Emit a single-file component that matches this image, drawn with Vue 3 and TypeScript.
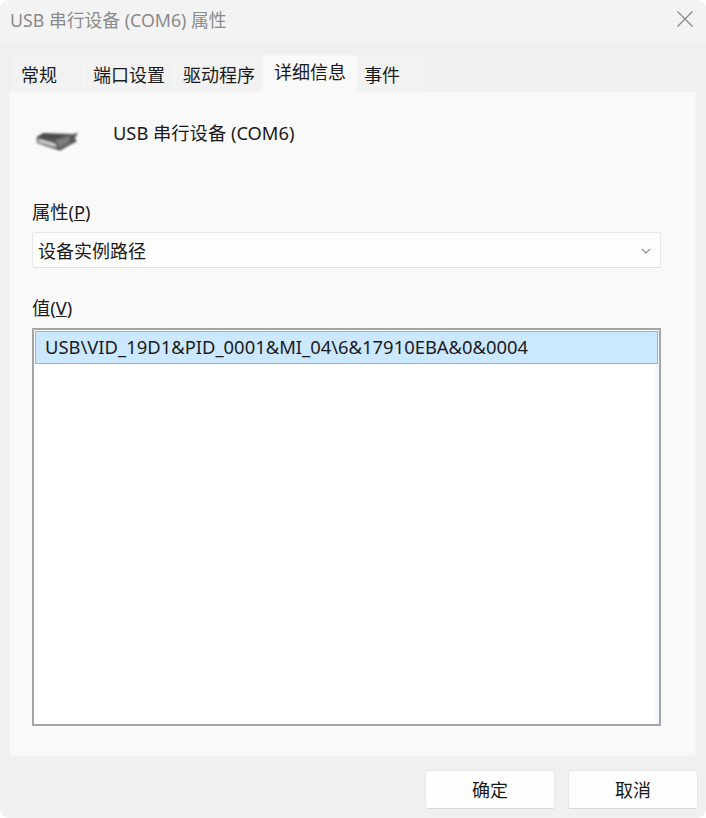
<script setup lang="ts">
const tabs = [
  { label: '常规', active: false, w: 72 },
  { label: '端口设置', active: false, w: 90 },
  { label: '驱动程序', active: false, w: 88 },
  { label: '详细信息', active: true, w: 95 },
  { label: '事件', active: false, w: 67 },
]
</script>

<template>
  <div class="window">
    <header class="titlebar">
      <span class="title">USB 串行设备 (COM6) 属性</span>
      <svg class="close" width="16" height="16" viewBox="0 0 16 16" aria-hidden="true">
        <path d="M0.5 0.5 L15.5 15.5 M15.5 0.5 L0.5 15.5" stroke="#8a8a8a" stroke-width="1.3" fill="none" />
      </svg>
    </header>

    <div class="content">
      <nav class="tabs">
        <div
          v-for="t in tabs"
          :key="t.label"
          class="tab"
          :class="{ active: t.active }"
          :style="{ width: t.w + 'px' }"
        >{{ t.label }}</div>
      </nav>

      <section class="panel">
        <div class="device">
          <svg class="device-icon" width="48" height="30" viewBox="0 0 48 30" aria-hidden="true">
            <defs>
              <filter id="soft" x="-10%" y="-15%" width="120%" height="130%">
                <feGaussianBlur stdDeviation="0.8" />
              </filter>
            </defs>
            <g filter="url(#soft)">
              <path d="M4.7 14 L11 10 L41 11 L46 9.7 L43 15 L44.7 18.7 L38 22 L28 27.7 L4.7 20 Z" fill="#5a5a5a" />
              <path d="M5 14 L12 10.5 L36 11.5 L24 16 Z" fill="#4a4a4a" />
              <path d="M24 17 L38 13 L37 20 L27 25 Z" fill="#7c7c7c" />
              <path d="M5 15.5 L24 21 L25.5 25 L5 19.5 Z" fill="#8c8c8c" />
              <path d="M7 16.3 L23 21 L24 23.4 L7 18.6 Z" fill="#e2e2e2" />
            </g>
          </svg>
          <span class="device-name">USB 串行设备 (COM6)</span>
        </div>

        <label class="field-label">属性(<u>P</u>)</label>
        <div class="select">
          <span class="select-text">设备实例路径</span>
          <svg class="chevron" width="10" height="6" viewBox="0 0 10 6" aria-hidden="true">
            <path d="M1 1 L5 5 L9 1" stroke="#8c8c8c" stroke-width="1.1" fill="none" />
          </svg>
        </div>

        <label class="field-label value-label">值(<u>V</u>)</label>
        <div class="listbox">
          <div class="list-item">USB\VID_19D1&amp;PID_0001&amp;MI_04\6&amp;17910EBA&amp;0&amp;0004</div>
        </div>
      </section>

      <footer class="actions">
        <button class="btn" type="button">确定</button>
        <button class="btn" type="button">取消</button>
      </footer>
    </div>
  </div>
</template>

<style>
html, body {
  margin: 0;
  background: #ffffff;
}
</style>

<style scoped>
.window {
  width: 706px;
  height: 818px;
  box-sizing: border-box;
  border-radius: 9px;
  overflow: hidden;
  display: flex;
  flex-direction: column;
  background: #f0f0f0;
  font-family: "Noto Sans", "Noto Sans CJK SC", sans-serif;
  color: #1b1b1b;
}
.titlebar {
  height: 42px;
  flex: none;
  background: #f3f3f3;
  display: flex;
  align-items: center;
  justify-content: space-between;
  padding: 0 13px 0 10px;
  box-sizing: border-box;
}
.title {
  font-size: 17.8px;
  color: #8b8b8b;
  margin-bottom: 5px;
}
.close {
  margin-bottom: 5px;
}
.content {
  flex: 1;
  display: flex;
  flex-direction: column;
  padding: 0 9px;
  min-height: 0;
}
.tabs {
  height: 49px;
  flex: none;
  display: flex;
  align-items: flex-end;
  padding-left: 3px;
}
.tab {
  height: 33px;
  box-sizing: border-box;
  background: #f2f2f2;
  border: 1px solid #f5f5f5;
  border-bottom: none;
  font-size: 18px;
  line-height: 32px;
  padding-left: 8px;
  white-space: nowrap;
}
.tab:last-child {
  padding-left: 6px;
}
.tab.active {
  height: 36px;
  background: #f9f9f9;
  border-color: #f6f6f6;
  padding-left: 11px;
}
.panel {
  height: 665px;
  flex: none;
  width: 687px;
  box-sizing: border-box;
  background: #f9f9f9;
  border: 1px solid #f4f4f4;
  padding: 0 34px 0 22px;
  display: flex;
  flex-direction: column;
}
.device {
  height: 80px;
  flex: none;
  display: flex;
  align-items: flex-start;
}
.device-icon {
  margin-top: 31px;
  flex: none;
}
.device-name {
  font-size: 18.3px;
  margin-left: 33px;
  margin-top: 28px;
  line-height: 26px;
}
.field-label {
  font-size: 18.3px;
  line-height: 26px;
  margin-top: 27px;
  display: block;
}
.select {
  margin-top: 7px;
  height: 36px;
  box-sizing: border-box;
  background: #fdfdfd;
  border: 1px solid #e8e8e8;
  border-bottom-color: #dedede;
  border-radius: 3px;
  display: flex;
  align-items: center;
  justify-content: space-between;
  padding: 0 9px 0 5px;
  font-size: 18px;
}
.chevron {
  margin-top: 2px;
}
.listbox {
  margin-top: 7px;
  height: 398px;
  box-sizing: border-box;
  background: #ffffff;
  border: 2px solid #a3a5a9;
  padding: 1px 1px 0;
  box-shadow: inset -4px 0 0 #f5f8fd;
}
.list-item {
  height: 31px;
  background: #cce8ff;
  border: 1px solid #7db8ee;
  font-size: 18.4px;
  line-height: 30px;
  padding-left: 9px;
  white-space: nowrap;
}
.actions {
  flex: 1;
  display: flex;
  justify-content: flex-end;
  align-items: flex-start;
  gap: 13px;
  padding-top: 14px;
  margin-right: -1px;
}
.btn {
  width: 130px;
  height: 39px;
  box-sizing: border-box;
  background: #fdfdfd;
  border: 1px solid #e8e8e8;
  border-bottom-color: #d8d8d8;
  border-radius: 3px;
  font-family: inherit;
  font-size: 18px;
  color: #1b1b1b;
  padding: 0 0 2px;
}
</style>
